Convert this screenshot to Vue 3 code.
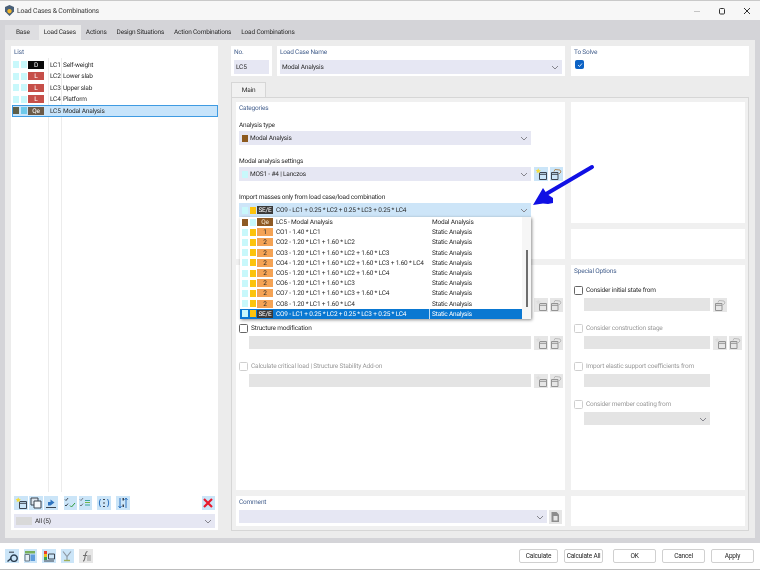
<script setup>
import { h } from 'vue'

const tabs = ['Base', 'Load Cases', 'Actions', 'Design Situations', 'Action Combinations', 'Load Combinations']

const loadCases = [
  { id: 'LC1', name: 'Self-weight', tag: 'D', tagColor: '#0a0a0a', c1: '#c8f8fb', c2: '#c8f8fb' },
  { id: 'LC2', name: 'Lower slab', tag: 'L', tagColor: '#c64f49', c1: '#c8f8fb', c2: '#c8f8fb' },
  { id: 'LC3', name: 'Upper slab', tag: 'L', tagColor: '#c64f49', c1: '#c8f8fb', c2: '#c8f8fb' },
  { id: 'LC4', name: 'Platform', tag: 'L', tagColor: '#c64f49', c1: '#c8f8fb', c2: '#c8f8fb' },
  { id: 'LC5', name: 'Modal Analysis', tag: 'Qe', tagColor: '#6b5a48', c1: '#5f5f48', c2: '#6fc9ea', active: true }
]

const combos = [
  { text: 'LC5 - Modal Analysis', type: 'Modal Analysis', tag: 'Qe', tagColor: '#8f5a24', tagText: '#f3e6d0', c1: '#8f5a24', c2: '#c8f8fb' },
  { text: 'CO1 - 1.40 * LC1', tag: '1' },
  { text: 'CO2 - 1.20 * LC1 + 1.60 * LC2', tag: '2' },
  { text: 'CO3 - 1.20 * LC1 + 1.60 * LC2 + 1.60 * LC3', tag: '2' },
  { text: 'CO4 - 1.20 * LC1 + 1.60 * LC2 + 1.60 * LC3 + 1.60 * LC4', tag: '2' },
  { text: 'CO5 - 1.20 * LC1 + 1.60 * LC2 + 1.60 * LC4', tag: '2' },
  { text: 'CO6 - 1.20 * LC1 + 1.60 * LC3', tag: '2' },
  { text: 'CO7 - 1.20 * LC1 + 1.60 * LC3 + 1.60 * LC4', tag: '2' },
  { text: 'CO8 - 1.20 * LC1 + 1.60 * LC4', tag: '2' },
  { text: 'CO9 - LC1 + 0.25 * LC2 + 0.25 * LC3 + 0.25 * LC4', tag: 'SE/E', tagColor: '#3a3a3a', tagText: '#fff', selected: true }
]

const listTools = [
  ['new', 0], ['copy', 1.5], ['export', 1.5], ['checkOk', 6], ['checkSwap', 1.5], ['renumber', 5], ['sort', 5.5]
]
const footerTools = ['search', 'table', 'colors', 'model', 'formula']

// kleine Werkzeug-Symbole, 12x12
const dark = '#3b4450'
const icons = {
  new: [
    { d: 'M4.5 4.5h7v7h-7zM4.5 6.3h7', s: dark },
    { d: 'M3.2.3l.8 1.7 1.9.2-1.4 1.2.4 1.8-1.7-.9-1.6.9.4-1.8L.6 2.2l1.8-.2z', f: '#f3dc3a' }
  ],
  edit: [
    { d: 'M1.5 4.5h6.5v7H1.5zM1.5 6.3h6.5', s: dark },
    { d: 'M4 3.5l1-2 5 .5 1 2-2 2', s: '#b08a5a' }
  ],
  copy: [
    { d: 'M1 1h7v7H1z', s: dark, f: '#dfe6ee' },
    { d: 'M4 4h7v7H4z', s: dark, f: '#f5f8fb' }
  ],
  export: [
    { d: 'M1 10.5h10', s: dark },
    { d: 'M3 8.5V5h2.5V2.5l4 3-4 3z', f: '#2f74c0' }
  ],
  checkOk: [
    { d: 'M1 2.5l1 1 2-2.4M1 8l1 1 2-2.4', s: dark },
    { d: 'M6 8.5l1.5 1.5L11 6', s: '#2e9b3a' }
  ],
  checkSwap: [
    { d: 'M1 2.5l1 1 2-2.4M1 8l1 1 2-2.4', s: '#6b7480' },
    { d: 'M6 3.5h5M6 8h5', s: '#3aa3a0' },
    { d: 'M6 5.5h5', s: '#74b84a' }
  ],
  renumber: [
    { d: 'M2.5 2c-1.5 2.5-1.5 5.5 0 8M9.5 2c1.500 2.500 1.500 5.500 0 8', s: '#2f74c0' },
    { d: 'M5 2.500h2M5 6h2M5 9.500h2', s: dark }
  ],
  sort: [
    { d: 'M3 1v10M1.500 9l1.500 2 1.500-2', s: '#2f74c0' },
    { d: 'M9 11V1M7.500 3L9 1l1.500 2', s: '#2f74c0' },
    { d: 'M5.500 1h1.500v2.500h-1.500zM5.500 7.500h1.500V10h-1.500z', f: dark }
  ],
  close: [
    { d: 'M2 2l8 8M10 2l-8 8', s: '#e8192c', w: 2.2 }
  ],
  sheet: [
    { d: 'M2.500 1h5l2.500 2.500V11h-7.500z', f: '#8d8d8d' },
    { d: 'M4.500 5h4v4.500h-4z', f: '#e6e6e6' }
  ],
  search: [
    { d: 'M8 5a3.200 3.200 0 1 1-.01 0zM5.500 8L1.500 11.500', s: '#2a3d50', w: 1.4 },
    { d: 'M3 1.500h5v1.500H3z', f: '#62707e' }
  ],
  table: [
    { d: 'M1 1h10v2.500H1z', f: '#79b05b' },
    { d: 'M1 4.500h4.500V11H1z', f: '#e4eef6', s: '#6a7a88' },
    { d: 'M6.500 4.500H11V11H6.500z', f: '#5f9ddb' }
  ],
  colors: [
    { d: 'M1 1h3v3H1z', f: '#e8402f' },
    { d: 'M1 4h3v3H1z', f: '#f2c21d' },
    { d: 'M1 7h3v3H1z', f: '#3fa34d' },
    { d: 'M5.500 4h6v5h-6z', s: dark },
    { d: 'M1 11h10', s: dark }
  ],
  model: [
    { d: 'M2 1.500l4 5 4-5M6 6.500V10', s: '#8d98a3', w: 1.2 },
    { d: 'M3 10.500h6', s: '#9fb05a', w: 1.4 }
  ],
  formula: [
    { d: 'M3 11c1.500 0 1.500-1 2-4s.5-5.500 2.500-5.500M3 5.500h4', s: '#6e6e6e', w: 1.1 },
    { d: 'M8 5v6M10 5v6', s: '#9a9a9a' }
  ]
}

const Tool = (props) =>
  h('span', { class: ['tool', props.off && 'tool-off'] }, [
    h('svg', { width: 12, height: 12, viewBox: '0 0 12 12', style: props.off ? 'opacity:.5;filter:grayscale(1)' : '' },
      icons[props.name].map((p) =>
        h('path', { d: p.d, fill: p.f || 'none', stroke: p.s || 'none', 'stroke-width': p.w || 1 })
      )
    )
  ])
Tool.props = { name: String, off: Boolean }

const Chevron = () =>
  h('svg', { width: 8, height: 5, viewBox: '0 0 8 5', class: 'chev' }, [
    h('path', { d: 'M1 1l3 3 3-3', fill: 'none', stroke: '#85858d', 'stroke-width': 1 })
  ])
</script>

<template>
  <div class="window">
    <header class="titlebar">
      <svg class="logo" width="9" height="11" viewBox="0 0 9 11">
        <path d="M4.500 0L9 2v4.500L4.500 11 0 6.500V2z" fill="#4a6078" />
        <path d="M4.500 4a2.200 2.200 0 1 1-.01 0z" fill="#f0b52c" />
      </svg>
      <span class="title">Load Cases &amp; Combinations</span>
      <div class="win-btns">
        <svg width="8" height="8" viewBox="0 0 8 8"><path d="M1 4.500h6" stroke="#c4c4c4" /></svg>
        <svg width="8" height="8" viewBox="0 0 8 8"><rect x="1.500" y="1.500" width="5" height="5.500" rx="1" fill="none" stroke="#333" /></svg>
        <svg width="8" height="8" viewBox="0 0 8 8"><path d="M1 1l6 6M7 1L1 7" stroke="#333" /></svg>
      </div>
    </header>

    <nav class="tabstrip">
      <span v-for="(t, i) in tabs" :key="t" class="tab" :class="{ on: i === 1 }">{{ t }}</span>
    </nav>

    <main class="frame">
      <div class="content">
        <section class="list-panel">
          <div class="caption">List</div>
          <div class="list">
            <div v-for="lc in loadCases" :key="lc.id" class="lc-row" :class="{ active: lc.active }">
              <i class="chip" :style="{ background: lc.c1 }"></i>
              <i class="chip" :style="{ background: lc.c2 }"></i>
              <b class="tag" :style="{ background: lc.tagColor }">{{ lc.tag }}</b>
              <span class="lc-id">{{ lc.id }}</span>
              <span class="lc-name">{{ lc.name }}</span>
            </div>
          </div>
          <div class="list-tools">
            <Tool v-for="[name, gap] in listTools" :key="name" :name="name" :style="{ marginLeft: gap + 'px' }" />
            <Tool name="close" class="push" />
          </div>
          <div class="select all-select">
            <i class="all-swatch"></i>
            <span>All (5)</span>
            <Chevron />
          </div>
        </section>

        <div class="right">
          <div class="top-row">
            <section class="panel no-panel">
              <div class="caption">No.</div>
              <div class="select">LC5</div>
            </section>
            <section class="panel name-panel">
              <div class="caption">Load Case Name</div>
              <div class="select">Modal Analysis<Chevron /></div>
            </section>
            <section class="panel solve-panel">
              <div class="caption">To Solve</div>
              <span class="check checked">
                <svg width="6" height="6" viewBox="0 0 6 6"><path d="M1 3l1.500 1.500L5 1.500" fill="none" stroke="#fff" stroke-width=".8" /></svg>
              </span>
            </section>
          </div>

          <div class="main-tab">Main</div>
          <div class="pane">
            <div class="col-left">
              <section class="panel categories">
                <div class="caption">Categories</div>
                <div class="field">
                  <label>Analysis type</label>
                  <div class="select wide">
                    <i class="chip brown"></i>Modal Analysis<Chevron />
                  </div>
                </div>
                <div class="field">
                  <label>Modal analysis settings</label>
                  <div class="with-tools">
                    <div class="select wide">
                      <i class="chip cyan"></i>MOS1 - #4 | Lanczos<Chevron />
                    </div>
                    <Tool name="new" />
                    <Tool name="edit" />
                  </div>
                </div>
                <div class="field import-field">
                  <label>Import masses only from load case/load combination</label>
                  <div class="select wide current">
                    <i class="chip cyan"></i>
                    <i class="chip amber"></i>
                    <b class="tag sek">SE/E</b>
                    CO9 - LC1 + 0.25 * LC2 + 0.25 * LC3 + 0.25 * LC4
                    <Chevron />
                  </div>
                  <div class="dropdown">
                    <div class="rows">
                      <div v-for="c in combos" :key="c.text" class="combo" :class="{ selected: c.selected }">
                        <i class="chip" :style="{ background: c.c1 || '#c8f8fb' }"></i>
                        <i class="chip" :style="{ background: c.c2 || '#fcc30c' }"></i>
                        <b class="tag" :style="{ background: c.tagColor || '#f4a355', color: c.tagText || '#2a2a2a' }">{{ c.tag }}</b>
                        <span class="combo-text">{{ c.text }}</span>
                        <span class="combo-type">{{ c.type || 'Static Analysis' }}</span>
                      </div>
                    </div>
                    <div class="scroll"><i></i></div>
                  </div>
                </div>
              </section>

              <section class="panel options">
                <div class="opt">
                  <div class="with-tools input-row">
                    <div class="input"></div>
                    <Tool name="new" off />
                    <Tool name="edit" off />
                  </div>
                </div>
                <div class="opt">
                  <div class="check-row"><span class="check"></span>Structure modification</div>
                  <div class="with-tools input-row">
                    <div class="input"></div>
                    <Tool name="new" off />
                    <Tool name="edit" off />
                  </div>
                </div>
                <div class="opt off">
                  <div class="check-row"><span class="check"></span>Calculate critical load | Structure Stability Add-on</div>
                  <div class="with-tools input-row">
                    <div class="input"></div>
                    <Tool name="new" off />
                    <Tool name="edit" off />
                  </div>
                </div>
              </section>

              <section class="panel comment">
                <div class="caption">Comment</div>
                <div class="with-tools">
                  <div class="select comment-select"><Chevron /></div>
                  <Tool name="sheet" class="tool-gray" />
                </div>
              </section>
            </div>

            <div class="col-right">
              <section class="panel blank-a"></section>
              <section class="panel blank-b"></section>
              <section class="panel special">
                <div class="caption">Special Options</div>
                <div class="opt">
                  <div class="check-row"><span class="check"></span>Consider initial state from</div>
                  <div class="with-tools input-row">
                    <div class="input short"></div>
                    <Tool name="edit" off />
                  </div>
                </div>
                <div class="opt off">
                  <div class="check-row"><span class="check"></span>Consider construction stage</div>
                  <div class="with-tools input-row">
                    <div class="input short"></div>
                    <Tool name="new" off />
                    <Tool name="edit" off />
                  </div>
                </div>
                <div class="opt off">
                  <div class="check-row"><span class="check"></span>Import elastic support coefficients from</div>
                  <div class="input-row"><div class="input short"></div></div>
                </div>
                <div class="opt off">
                  <div class="check-row"><span class="check"></span>Consider member coating from</div>
                  <div class="input-row"><div class="input short"><Chevron /></div></div>
                </div>
              </section>
              <section class="panel blank-b"></section>
            </div>
          </div>
        </div>
      </div>
    </main>

    <footer class="footer">
      <div class="footer-tools">
        <Tool v-for="name in footerTools" :key="name" :name="name" :class="{ 'tool-gray': name === 'formula' }" />
      </div>
      <div class="footer-btns">
        <button>Calculate</button>
        <button>Calculate All</button>
        <button class="gap-left">OK</button>
        <button>Cancel</button>
        <button>Apply</button>
      </div>
    </footer>

    <svg class="pointer" width="80" height="60" viewBox="0 0 80 60">
      <path d="M67 12L16 42" fill="none" stroke="#1010e4" stroke-width="4" stroke-linecap="round" />
      <path d="M8 50L18 33l4 6 6 4 0 5-5 1-5-.5z" fill="#1010e4" />
    </svg>
  </div>
</template>

<style>
body {
  margin: 0;
  background: #fff;
}
</style>

<style scoped>
.window {
  position: relative;
  width: 760px;
  height: 570px;
  display: flex;
  flex-direction: column;
  overflow: hidden;
  background: #fff;
  color: #2b2b2b;
  font: 6.5px/10px Roboto, "Noto Sans", sans-serif;
  letter-spacing: -.18px;
  text-rendering: geometricPrecision;
  filter: blur(.3px);
}

.titlebar {
  height: 20px;
  flex: none;
  display: flex;
  align-items: center;
  padding: 0 9px 0 5px;
  background: #f7f7f7;
  border-top: 1px solid #c9c9c9;
  box-sizing: border-box;
}
.logo { margin-right: 3px; }
.title { font-size: 6.9px; color: #3a3a3a; }
.win-btns { margin-left: auto; display: flex; gap: 17px; }

.tabstrip {
  height: 20px;
  flex: none;
  display: flex;
  align-items: flex-end;
  padding-left: 5px;
  background: #d4d4d8;
  box-sizing: border-box;
}
.tab {
  height: 15px;
  line-height: 15px;
  padding: 0 5px;
}
.tab.on { background: #ececec; }
.tab:first-child { background: #dedee1; padding: 0 9px 0 11px; }

.frame {
  flex: 1;
  min-height: 0;
  padding: 0 5px 5px;
  background: #d4d4d8;
}
.content {
  height: 100%;
  display: flex;
  padding: 6px;
  box-sizing: border-box;
  background: #ececec;
}

.caption { color: #47628f; height: 11px; padding-left: 3px; }

.list-panel {
  width: 207px;
  height: 484px;
  display: flex;
  flex-direction: column;
  background: #fff;
  padding-top: 1px;
  box-sizing: border-box;
  flex: none;
}
.list {
  flex: 1;
  padding-top: 1px;
  background:
    linear-gradient(#ececec, #ececec) 37px 0 / 1px 100% no-repeat,
    linear-gradient(#ececec, #ececec) 50px 0 / 1px 100% no-repeat;
  margin-bottom: 4px;
}
.lc-row {
  height: 11.5px;
  display: flex;
  align-items: center;
  padding-left: 2px;
  box-sizing: border-box;
}
.lc-row.active {
  background: #c7e4fb;
  border: 1px solid #3f9be2;
  margin-left: 1px;
  padding-left: 0;
}
.chip {
  width: 6px;
  height: 7px;
  margin-right: 1.5px;
  flex: none;
  display: inline-block;
}
.tag {
  width: 16px;
  height: 8px;
  line-height: 8px;
  text-align: center;
  color: #fff;
  font-weight: 400;
  flex: none;
  display: inline-block;
}
.lc-id { width: 13px; margin-left: 6px; flex: none; }

.list-tools {
  display: flex;
  padding: 0 3px;
  height: 13px;
  margin-bottom: 5px;
}
.push { margin-left: auto !important; }
.tool {
  width: 13.5px;
  height: 13.5px;
  flex: none;
  display: inline-flex;
  align-items: center;
  justify-content: center;
  background: #cbe5f8;
}
.tool-off, .tool-gray { background: #e6e6e6; }

.select {
  position: relative;
  height: 14px;
  line-height: 14px;
  background: #e6e7f3;
  display: flex;
  align-items: center;
  padding-left: 2px;
  box-sizing: border-box;
  white-space: nowrap;
}
.chev { position: absolute; right: 3px; top: 5px; }
.all-select { margin: 0 3px 2px; }
.all-swatch { width: 16px; height: 8px; background: #d9d9d9; margin-right: 3px; }

.right { margin-left: 13px; width: 518px; flex: none; }
.top-row { display: flex; gap: 5px; height: 30px; }
.panel { background: #fff; box-sizing: border-box; }
.top-row .panel { padding-top: 1px; }
.top-row .caption { height: 13px; padding-left: 0; }
.no-panel { width: 41px; padding: 0 3px; }
.name-panel { width: 288px; padding: 0 3px; margin-right: 1px; }
.solve-panel { width: 178px; padding: 0 3px; }

.main-tab {
  width: 35px;
  height: 15px;
  line-height: 15px;
  margin-top: 6px;
  text-align: center;
  background: #f1f1f1;
  border: 1px solid #d6d6d6;
  border-bottom: 0;
  box-sizing: border-box;
}
.pane {
  display: flex;
  gap: 6px;
  height: 434px;
  padding: 4px 3px 0 4px;
  box-sizing: border-box;
  border: 1px solid #d6d6d6;
  background: #f0f0f0;
}
.col-left, .col-right {
  display: flex;
  flex-direction: column;
  gap: 6px;
  flex: none;
}
.col-left { width: 329px; }
.col-right { width: 174px; }

.categories { height: 157px; padding: 0 3px; position: relative; }
.categories .caption { height: 18px; padding: 1px 0 0; box-sizing: border-box; }
.field { height: 36px; position: relative; }
.field label { display: block; height: 11px; }
.wide { width: 292px; flex: none; }
.with-tools { display: flex; gap: 2px; }
.with-tools .wide { margin-right: 1px; }
.brown { background: #8d5a1e; margin-left: 1px; margin-right: 2px; }
.cyan { background: #c8f8fb; }
.amber { background: #fcc30c; }
.field .cyan { margin-left: 1px; margin-right: 2px; }
.import-field .amber { margin-right: 1px; }

.current { background: #cde5f8; }
.sek { background: #3a3a3a; margin-right: 3px; }

.dropdown {
  position: absolute;
  left: 1px;
  top: 25px;
  z-index: 2;
  width: 291px;
  height: 102px;
  display: flex;
  background: #fff;
  box-shadow: 1px 1px 3px rgba(0, 0, 0, .45);
}
.rows { flex: 1; min-width: 0; }
.combo {
  height: 10.2px;
  line-height: 10.2px;
  display: flex;
  align-items: center;
  padding-left: 2px;
  white-space: nowrap;
}
.combo .chip { width: 6px; height: 7px; margin-right: 2px; }
.combo .chip + .chip { margin-right: 1px; }
.combo-text { width: 153px; margin-left: 3px; flex: none; }
.combo-type { padding-left: 3px; }
.combo.selected { background: #0a78d2; color: #fff; }
.combo.selected .combo-type { border-left: 1px solid #bcdcf5; padding-left: 2px; }
.scroll { width: 9px; background: #f6f6f6; position: relative; }
.scroll i {
  position: absolute;
  left: 4px;
  top: 33px;
  width: 1.5px;
  height: 57px;
  background: #6e6e6e;
}

.options { height: 225px; padding-top: 20px; }
.opt { height: 38px; padding-left: 3px; }
.check-row { height: 10px; display: flex; align-items: center; white-space: nowrap; }
.check {
  width: 7px;
  height: 7px;
  margin-right: 3px;
  border: 1px solid #666;
  border-radius: 1.5px;
  background: #fff;
  flex: none;
  display: inline-flex;
  align-items: center;
  justify-content: center;
}
.check.checked { background: #0d63c5; border-color: #0d63c5; margin-left: 1px; }
.opt.off .check-row { color: #9a9a9a; }
.opt.off .check { border-color: #cfcfcf; }
.input-row { margin: 3px 0 0 10px; gap: 2px; }
.input { position: relative; width: 282px; height: 13px; background: #e4e4e4; margin-right: 1px; flex: none; }
.input.short { width: 126px; }
.options .opt:first-child { height: 28px; padding-top: 10px; }

.comment { height: 30px; padding: 1px 3px 0; }
.comment .caption { height: 13px; padding-left: 0; }
.comment-select { width: 308px; height: 13px; }

.blank-a { height: 121px; }
.blank-b { height: 30px; }
.special { height: 225px; }
.special .caption { height: 20px; padding: 1px 0 0 3px; box-sizing: border-box; }

.footer {
  height: 27px;
  flex: none;
  display: flex;
  align-items: center;
  padding: 0 6px 0 5px;
  background: #fff;
  border-bottom: 1px solid #bdbdbd;
  box-sizing: border-box;
}
.footer-tools { display: flex; gap: 5px; }
.footer-btns { margin-left: auto; display: flex; gap: 6px; }
.footer-btns button {
  width: 39px;
  height: 14px;
  padding: 0;
  font: inherit;
  letter-spacing: inherit;
  white-space: nowrap;
  color: #222;
  background: #fff;
  border: 1px solid #d0d0d0;
  border-radius: 2px;
}
.footer-btns button:nth-child(n + 3) { width: 43px; }
.footer-btns .gap-left { margin-left: 4px; }

.pointer {
  position: absolute;
  left: 525px;
  top: 155px;
  z-index: 3;
}
</style>
